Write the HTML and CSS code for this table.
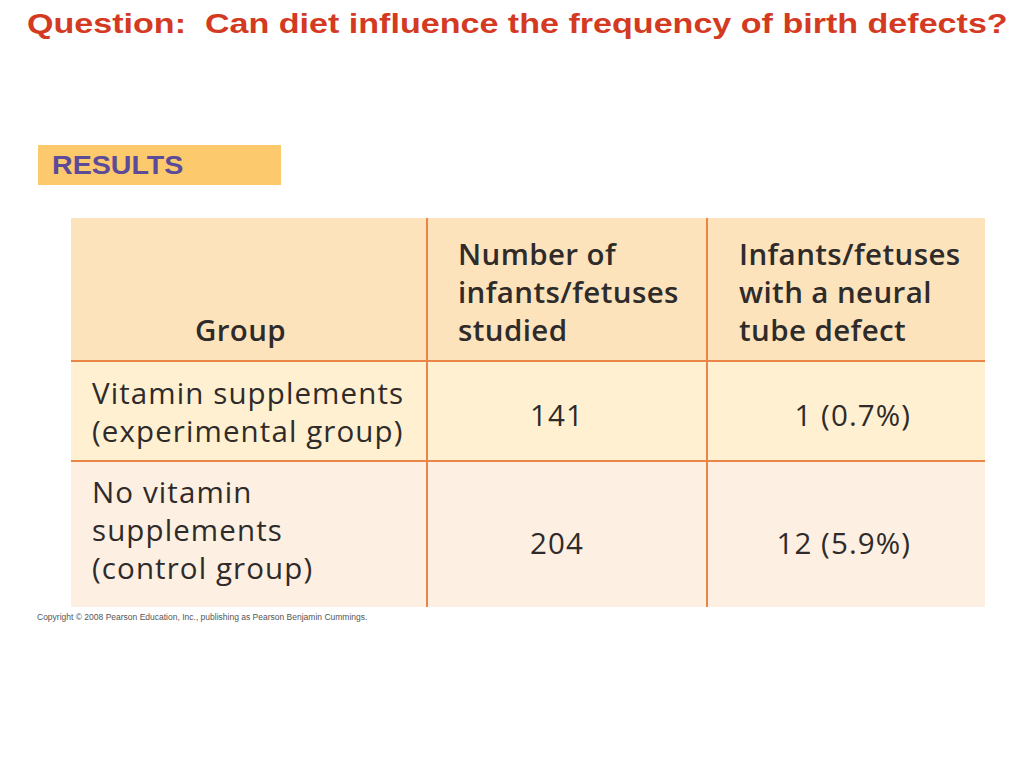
FILE: index.html
```html
<!DOCTYPE html>
<html>
<head>
<meta charset="utf-8">
<link rel="stylesheet" href="styles.css">
</head>
<body>
<div class="slide">
  <h1 class="title"><span>Question:&nbsp; Can diet influence the frequency of birth defects?</span></h1>
  <div class="results"><span>RESULTS</span></div>
  <div class="table">
    <div class="cell head c1"><span class="group">Group</span></div>
    <div class="cell head c2">Number of<br>infants/fetuses<br>studied</div>
    <div class="cell head c3">Infants/fetuses<br>with a neural<br>tube defect</div>
    <div class="cell r1 c1 label">Vitamin supplements<br>(experimental group)</div>
    <div class="cell r1 c2 num">141</div>
    <div class="cell r1 c3 num">1 (0.7%)</div>
    <div class="cell r2 c1 label">No vitamin<br>supplements<br>(control group)</div>
    <div class="cell r2 c2 num">204</div>
    <div class="cell r2 c3 num">12 (5.9%)</div>
  </div>
  <p class="copy">Copyright © 2008 Pearson Education, Inc., publishing as Pearson Benjamin Cummings.</p>
</div>
</body>
</html>
```
FILE: styles.css
```css
html, body {
  margin: 0;
  padding: 0;
  background: #ffffff;
}
.slide {
  width: 1024px;
  height: 768px;
  overflow: hidden;
}
.title {
  margin: 0;
  padding: 7px 0 0 27px;
  height: 32px;
  font-family: "Liberation Sans", Arial, sans-serif;
  font-weight: bold;
  font-size: 27px;
  line-height: 34px;
  color: #d43a22;
  white-space: nowrap;
}
.title span {
  display: inline-block;
  transform: scaleX(1.262);
  transform-origin: 0 50%;
}
.results {
  margin: 106px 0 0 38px;
  width: 243px;
  height: 40px;
  background: #fdc96d;
  display: flex;
  align-items: center;
}
.results span {
  display: inline-block;
  padding-left: 14px;
  font-family: "Liberation Sans", Arial, sans-serif;
  font-weight: bold;
  font-size: 26.5px;
  color: #5c4b98;
  transform: scaleX(1.08);
  transform-origin: 14px 50%;
}
.table {
  margin: 33px 0 0 71px;
  width: 914px;
  display: grid;
  grid-template-columns: 357px 280px 277px;
  grid-template-rows: 144px 100px 145px;
  font-family: "Open Sans", "Noto Sans", sans-serif;
  font-size: 29.5px;
  letter-spacing: 1.1px;
  line-height: 38px;
  color: #2e2b2a;
}
.cell {
  box-sizing: border-box;
  border-color: #ea8548;
  border-style: solid;
  border-width: 0;
  white-space: nowrap;
}
.c1 { border-right-width: 2px; }
.c2 { border-right-width: 2px; }
.head { background: #fde3bb; border-bottom-width: 2px; font-weight: 600; letter-spacing: 0.4px; }
.r1 { background: #fff0d1; border-bottom-width: 2px; }
.r2 { background: #fdefe1; }
.head.c1 {
  display: flex;
  align-items: flex-end;
  justify-content: center;
  padding: 0 16px 11px 0;
}
.head.c2 { padding: 17px 0 0 30px; }
.head.c3 { padding: 17px 0 0 31px; }
.label { padding: 12px 0 0 21px; }
.r2.label { padding-top: 11px; }
.num {
  display: flex;
  align-items: center;
}
.c2.num { justify-content: center; padding-right: 20px; }
.c3.num { justify-content: flex-end; padding-right: 74px; }
.r1.num { padding-top: 7px; }
.r2.num { padding-top: 17px; }
.copy {
  margin: 5px 0 0 37px;
  font-family: "Liberation Sans", Arial, sans-serif;
  font-size: 8.5px;
  color: #555555;
}
```
